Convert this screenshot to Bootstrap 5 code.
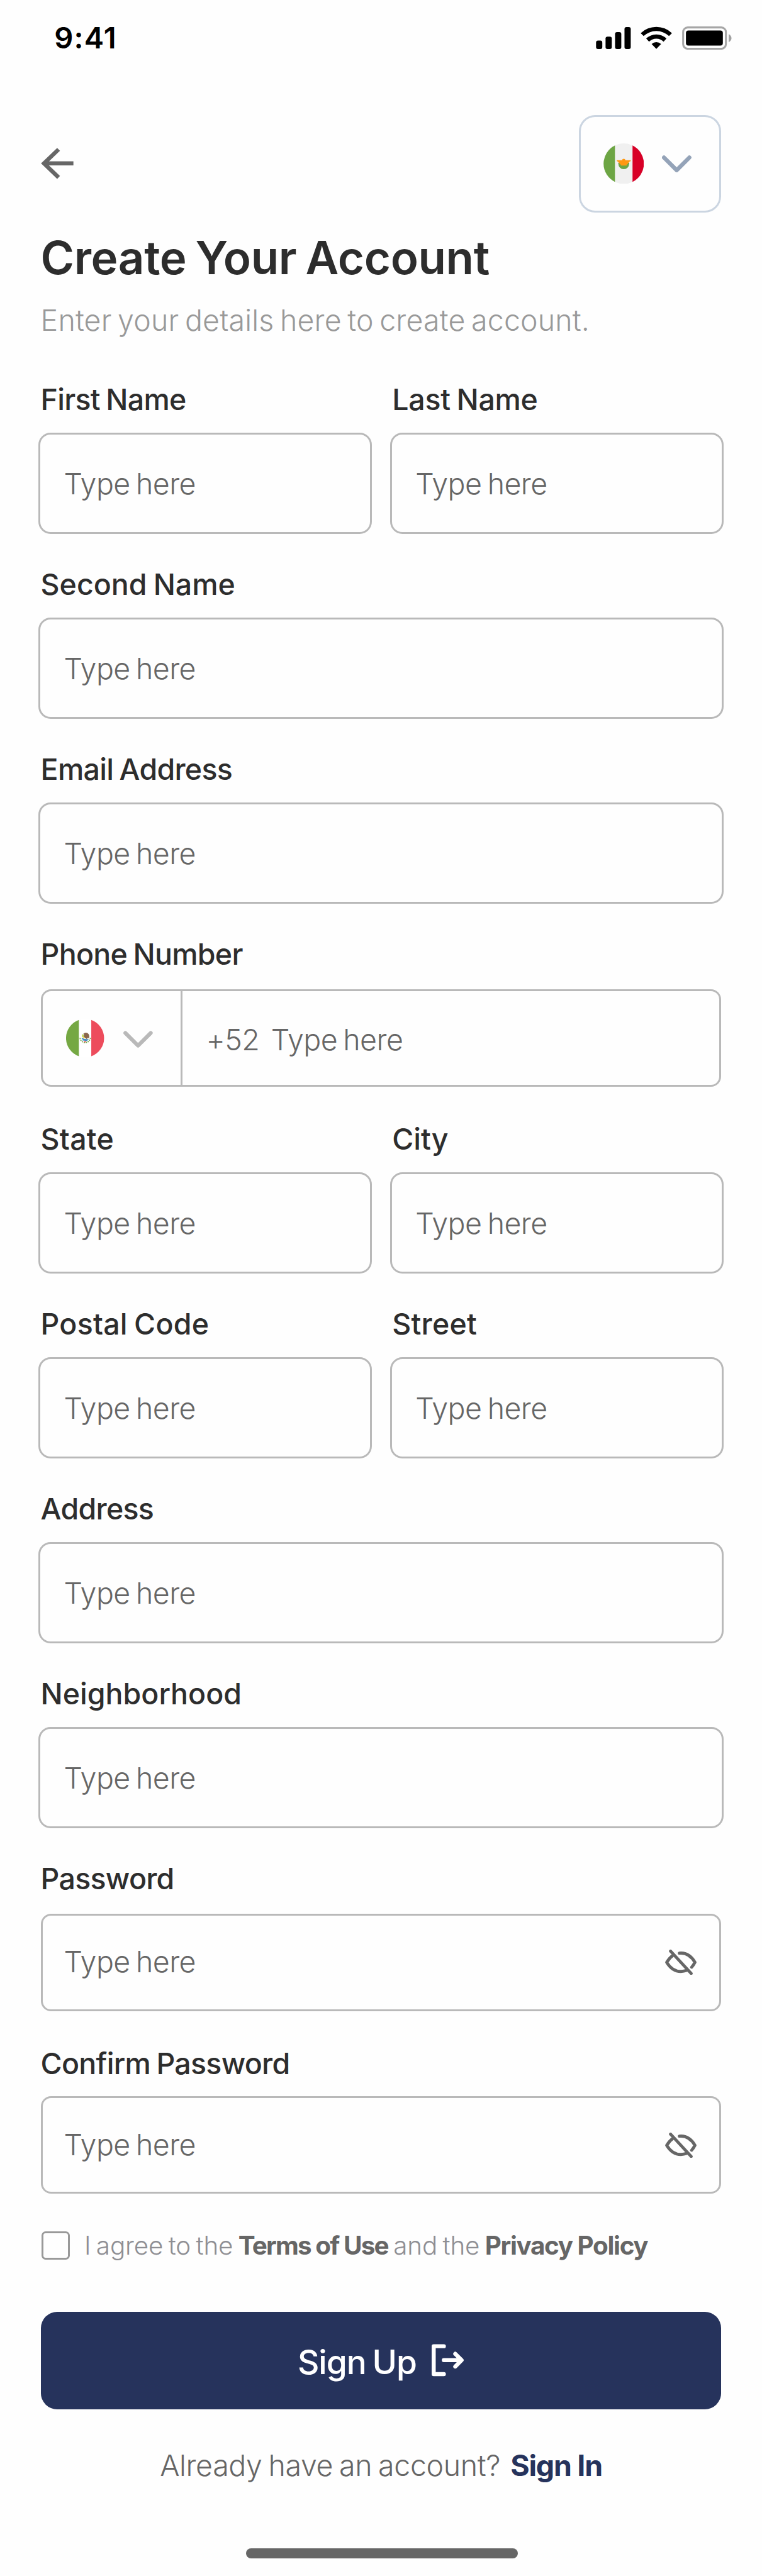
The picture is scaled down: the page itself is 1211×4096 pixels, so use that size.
<!doctype html>
<html lang="en">
<head>
<meta charset="utf-8">
<meta name="viewport" content="width=device-width, initial-scale=1">
<title>Create Your Account</title>
<link href="https://cdn.jsdelivr.net/npm/bootstrap@5.3.0/dist/css/bootstrap.min.css" rel="stylesheet">
<style>
  /* 1rem is one unit of the 375-unit wide mobile screen */
  html { font-size: calc(100vw / 375); }
  body { font-family: Inter, "Liberation Sans", sans-serif; background: #fefefe; color: #2d2d2d; min-height: 100vh; overflow-x: hidden; }
  svg { display: block; flex: none; }

  .status-bar { height: 37.35rem; padding: 0 15rem 0 26.7rem; }
  .status-time { font-size: 14.6rem; font-weight: 600; color: #000; line-height: 20rem; letter-spacing: .025em; }
  .status-icons { width: 66.75rem; height: 11.5rem; }

  .screen-body { padding: 0 20rem; }
  .top-row { margin-top: 19.2rem; }
  .back-icon { width: 16.2rem; height: 16rem; }
  .region-picker { width: 70rem; height: 48rem; border: 1rem solid #cbd5e1; border-radius: 8rem; padding: 0 0 0 11rem; background: transparent; }
  .flag-lg { width: 20rem; height: 20rem; }
  .chev { width: 14.5rem; height: 8.5rem; }
  .chev-slate { margin: .6rem 0 0 8.75rem; color: #94a3b8; }
  .chev-gray { margin: 1.2rem 0 0 9.25rem; color: #b9b9b9; }

  .page-title { font-size: 22.5rem; font-weight: 600; line-height: 28rem; margin: 8.45rem 0 0; word-spacing: -.05em; letter-spacing: -.0055em; }
  .page-sub { font-size: 14.4rem; font-weight: 300; line-height: 20rem; margin: 6.8rem 0 19rem; color: #999; word-spacing: -.08em; letter-spacing: .0035em; white-space: nowrap; }

  .field-row { --bs-gutter-x: 11rem; }
  .field-name { display: block; font-size: 14.4rem; font-weight: 500; line-height: 20rem; margin: 0; word-spacing: -.05em; letter-spacing: .005em; white-space: nowrap; }
  .t5 { letter-spacing: 0; }
  .t10 { letter-spacing: -.006em; }
  .t20 { letter-spacing: -.0155em; }
  .entry { display: flex; align-items: center; border: 1rem solid #b9b9b9; border-radius: 6rem; height: 50rem; margin: 6.25rem -1rem 14.78rem; padding: .5rem 11.5rem 0; }
  .entry-inner { height: 48rem; margin: 7.25rem 0 15.78rem; padding: 0 11.25rem .5rem 10.5rem; border-radius: 5rem; }
  .entry-last { margin: 6.25rem 0 0; }
  .entry-phone { padding: 0; }
  .entry .form-control { border: 0; padding: 0; border-radius: 0; background: transparent; box-shadow: none; font-size: 14.4rem; line-height: 20rem; font-weight: 300; color: #666; word-spacing: -.07em; letter-spacing: -.012em; min-width: 0; }
  .entry .form-control::placeholder { color: #666; opacity: 1; }
  .dial-picker { flex: none; width: 69rem; border-right: 1rem solid #b9b9b9; padding-left: 11.5rem; }
  .flag-sm { width: 19rem; height: 19rem; }
  .dial-code { font-size: 14.4rem; font-weight: 300; line-height: 20rem; color: #666; letter-spacing: -.014em; padding: 1.5rem 5.8rem 0 11.5rem; }
  .entry-phone .form-control { padding-top: 1.5rem; }
  .eye { width: 15.5rem; height: 12.5rem; margin-top: .4rem; }

  .agree-row { margin: 18.5rem 0 0 .5rem; height: 14rem; }
  .agree-row .form-check-input { width: 14rem; height: 14rem; margin: 0; border: 1rem solid #999; border-radius: 2rem; background: transparent; flex: none; }
  .agree-text { font-size: 12.5rem; font-weight: 300; line-height: 14rem; color: #8e8e93; margin-left: 7rem; white-space: nowrap; word-spacing: -.07em; letter-spacing: -.003em; }
  .agree-text b { font-weight: 700; color: #666; letter-spacing: -.044em; word-spacing: -.01em; }
  .agree-text .pp { letter-spacing: -.033em; }

  .btn-signup { height: 48rem; margin-top: 25.5rem; padding: 0; border: 0; border-radius: 8rem; background: #26335c; color: #fff; gap: 7.6rem; }
  .btn-signup span { font-size: 16.5rem; font-weight: 500; line-height: 20rem; padding-top: 2rem; letter-spacing: -.02em; word-spacing: -.06em; }
  .exit-icon { width: 16rem; height: 16rem; }
  .signin-row { margin-top: 17.65rem; font-size: 14.4rem; line-height: 20rem; color: #666; font-weight: 300; letter-spacing: -.008em; word-spacing: -.06em; }
  .signin-row a { font-weight: 700; color: #26335c; margin-left: 5rem; letter-spacing: -.027em; word-spacing: 0; }
  .home-bar { width: 134rem; height: 5rem; border-radius: 2.5rem; background: #666; margin: 30.85rem 0 0 101rem; }
</style>
</head>
<body>
<header class="status-bar d-flex align-items-center justify-content-between">
  <span class="status-time">9:41</span>
  <svg class="status-icons" viewBox="1173 51 267 46" aria-hidden="true">
    <rect x="1173.3" y="79" width="12.3" height="16.7" rx="4"/>
    <rect x="1192" y="71" width="12.3" height="24.7" rx="4"/>
    <rect x="1210.7" y="62" width="12.3" height="33.7" rx="4"/>
    <rect x="1229.3" y="52.3" width="12.3" height="43.4" rx="4"/>
    <path d="M1261.2 64.2A44.5 44.5 0 0 1 1322.8 64.2L1317 70A36.5 36.5 0 0 0 1267 70Z"/>
    <path d="M1272 75A28.5 28.5 0 0 1 1312 75L1306.3 81A20.5 20.5 0 0 0 1277.7 81Z"/>
    <path d="M1282.7 85.6A13.8 13.8 0 0 1 1301.3 85.6L1292 95.2Z"/>
    <rect x="1344.8" y="53" width="84.2" height="42" rx="9" fill="none" stroke="#a6a6a6" stroke-width="3.8"/>
    <rect x="1350.3" y="59" width="72.7" height="29.7" rx="5"/>
    <path d="M1434.5 66.3Q1440 69.5 1440 74.2Q1440 79 1434.5 82.2Z" fill="#a0a0a0"/>
  </svg>
</header>

<main class="screen-body">
  <div class="top-row d-flex align-items-center justify-content-between">
    <svg class="back-icon" viewBox="80 290 64.8 64" fill="none" stroke="#666" stroke-width="8" aria-label="Back"><path d="M114.8 294.3L86 322L114.8 349.7M86 322H144"/></svg>
    <button class="region-picker d-flex align-items-center" type="button" aria-label="Region">
      <svg class="flag-lg" viewBox="0 0 80 80">
        <circle cx="40" cy="40" r="40" fill="#f0f0f0"/>
        <path d="M22.7 4.1A40 40 0 0 0 22.7 75.9Z" fill="#6da544"/>
        <path d="M57.3 4.1A40 40 0 0 1 57.3 75.9Z" fill="#d80027"/>
        <path d="M29.3 38.5V40A10.7 10.7 0 0 0 50.7 40V38.5Z" fill="#6da544"/>
        <path d="M26 33H36.6A3.5 3.5 0 0 1 43.4 33H54Q54 36 51 36Q51 38.6 48.5 38.6Q48.5 41 46.8 41L45.3 43.7H34.7L33.2 41Q31.5 41 31.5 38.6Q29 38.6 29 36Q26 36 26 33Z" fill="#ff9811"/>
      </svg>
      <svg class="chev chev-slate" viewBox="0 0 58 34" fill="none" stroke="currentColor" stroke-width="8" stroke-linecap="round" stroke-linejoin="round"><path d="M4 4.3L29 29.3L54 4.3"/></svg>
    </button>
  </div>

  <h1 class="page-title">Create Your Account</h1>
  <p class="page-sub">Enter your details here to create account.</p>

  <form>
    <div class="row field-row">
      <div class="col-6"><label class="field-name t20" for="first">First Name</label><div class="entry"><input id="first" class="form-control" placeholder="Type here"></div></div>
      <div class="col-6"><label class="field-name t10" for="last">Last Name</label><div class="entry"><input id="last" class="form-control" placeholder="Type here"></div></div>
      <div class="col-12"><label class="field-name t5" for="second">Second Name</label><div class="entry"><input id="second" class="form-control" placeholder="Type here"></div></div>
      <div class="col-12"><label class="field-name t20" for="email">Email Address</label><div class="entry"><input id="email" class="form-control" placeholder="Type here"></div></div>
      <div class="col-12">
        <label class="field-name t20" for="phone">Phone Number</label>
        <div class="entry entry-inner entry-phone">
          <div class="dial-picker d-flex align-items-center align-self-stretch">
            <svg class="flag-sm" viewBox="0 0 76 76">
              <circle cx="38" cy="38" r="37.5" fill="#fff"/>
              <path d="M25.2 2.2A38 38 0 0 0 25.2 73.8Z" fill="#75a843"/>
              <path d="M49.6 2.2A38 38 0 0 1 49.6 73.8Z" fill="#ed4c5c"/>
              <path d="M27.5 37.5A10.3 10.3 0 0 0 48 37.5" fill="none" stroke="#75a843" stroke-width="2.2" stroke-dasharray="2.4 1.6"/>
              <path d="M31 38Q36 42 44 40.5M32 41.5L42 43" fill="none" stroke="#428bc1" stroke-width="2"/>
              <path d="M31 31Q34 29 35 33L36 37L31 36Z" fill="#c9d96b"/>
              <path d="M34 29.5Q38 26 42 28Q47 31 45.5 38.5L42.5 37.5L41 40L37 37.5Q33.5 34.5 35.5 31.5Z" fill="#89664c"/>
              <path d="M33.5 37.2H37" stroke="#ffce31" stroke-width="1.8"/>
              <path d="M35 44H40L38.5 46H36Z" fill="#ed4c5c"/>
            </svg>
            <svg class="chev chev-gray" viewBox="0 0 58 34" fill="none" stroke="currentColor" stroke-width="7.6" stroke-linecap="round" stroke-linejoin="round"><path d="M4 4.3L29 29.3L54 4.3"/></svg>
          </div>
          <span class="dial-code">+52</span>
          <input id="phone" class="form-control" type="tel" placeholder="Type here">
        </div>
      </div>
      <div class="col-6"><label class="field-name" for="state">State</label><div class="entry"><input id="state" class="form-control" placeholder="Type here"></div></div>
      <div class="col-6"><label class="field-name t5" for="city">City</label><div class="entry"><input id="city" class="form-control" placeholder="Type here"></div></div>
      <div class="col-6"><label class="field-name" for="postal">Postal Code</label><div class="entry"><input id="postal" class="form-control" placeholder="Type here"></div></div>
      <div class="col-6"><label class="field-name" for="street">Street</label><div class="entry"><input id="street" class="form-control" placeholder="Type here"></div></div>
      <div class="col-12"><label class="field-name t20" for="address">Address</label><div class="entry"><input id="address" class="form-control" placeholder="Type here"></div></div>
      <div class="col-12"><label class="field-name t5" for="hood">Neighborhood</label><div class="entry"><input id="hood" class="form-control" placeholder="Type here"></div></div>
      <div class="col-12">
        <label class="field-name t20" for="pass">Password</label>
        <div class="entry entry-inner">
          <input id="pass" class="form-control" type="password" placeholder="Type here">
          <svg class="eye" viewBox="0 0 62 50" fill="none" stroke="#666" stroke-width="6" stroke-linecap="round" stroke-linejoin="round"><path d="M10.7 3L51.3 47M16.5 10.5Q8.5 16 3.2 25Q14 43 31 43Q37 43 42.5 41M28 7Q47 5 58.8 25Q56 30.5 52.3 34.7"/></svg>
        </div>
      </div>
      <div class="col-12">
        <label class="field-name t20" for="confirm">Confirm Password</label>
        <div class="entry entry-inner entry-last">
          <input id="confirm" class="form-control" type="password" placeholder="Type here">
          <svg class="eye" viewBox="0 0 62 50" fill="none" stroke="#666" stroke-width="6" stroke-linecap="round" stroke-linejoin="round"><path d="M10.7 3L51.3 47M16.5 10.5Q8.5 16 3.2 25Q14 43 31 43Q37 43 42.5 41M28 7Q47 5 58.8 25Q56 30.5 52.3 34.7"/></svg>
        </div>
      </div>
    </div>

    <div class="agree-row d-flex align-items-center">
      <input id="agree" class="form-check-input" type="checkbox">
      <label class="agree-text" for="agree">I agree to the <b>Terms of Use</b> and the <b class="pp">Privacy Policy</b></label>
    </div>

    <button class="btn btn-signup w-100 d-flex align-items-center justify-content-center" type="button">
      <span>Sign Up</span>
      <svg class="exit-icon" viewBox="849 4616 64 64" fill="none" stroke="#fff" stroke-width="8" stroke-linecap="round" stroke-linejoin="round"><path d="M873 4620.5H853V4675.5H873M873 4648H907M895.5 4635.5L908 4648L895.5 4660.5"/></svg>
    </button>
  </form>

  <div class="signin-row d-flex justify-content-center"><span>Already have an account?</span><a class="text-decoration-none" href="#">Sign In</a></div>
  <div class="home-bar"></div>
</main>
<script src="https://cdn.jsdelivr.net/npm/bootstrap@5.3.0/dist/js/bootstrap.bundle.min.js"></script>
</body>
</html>
